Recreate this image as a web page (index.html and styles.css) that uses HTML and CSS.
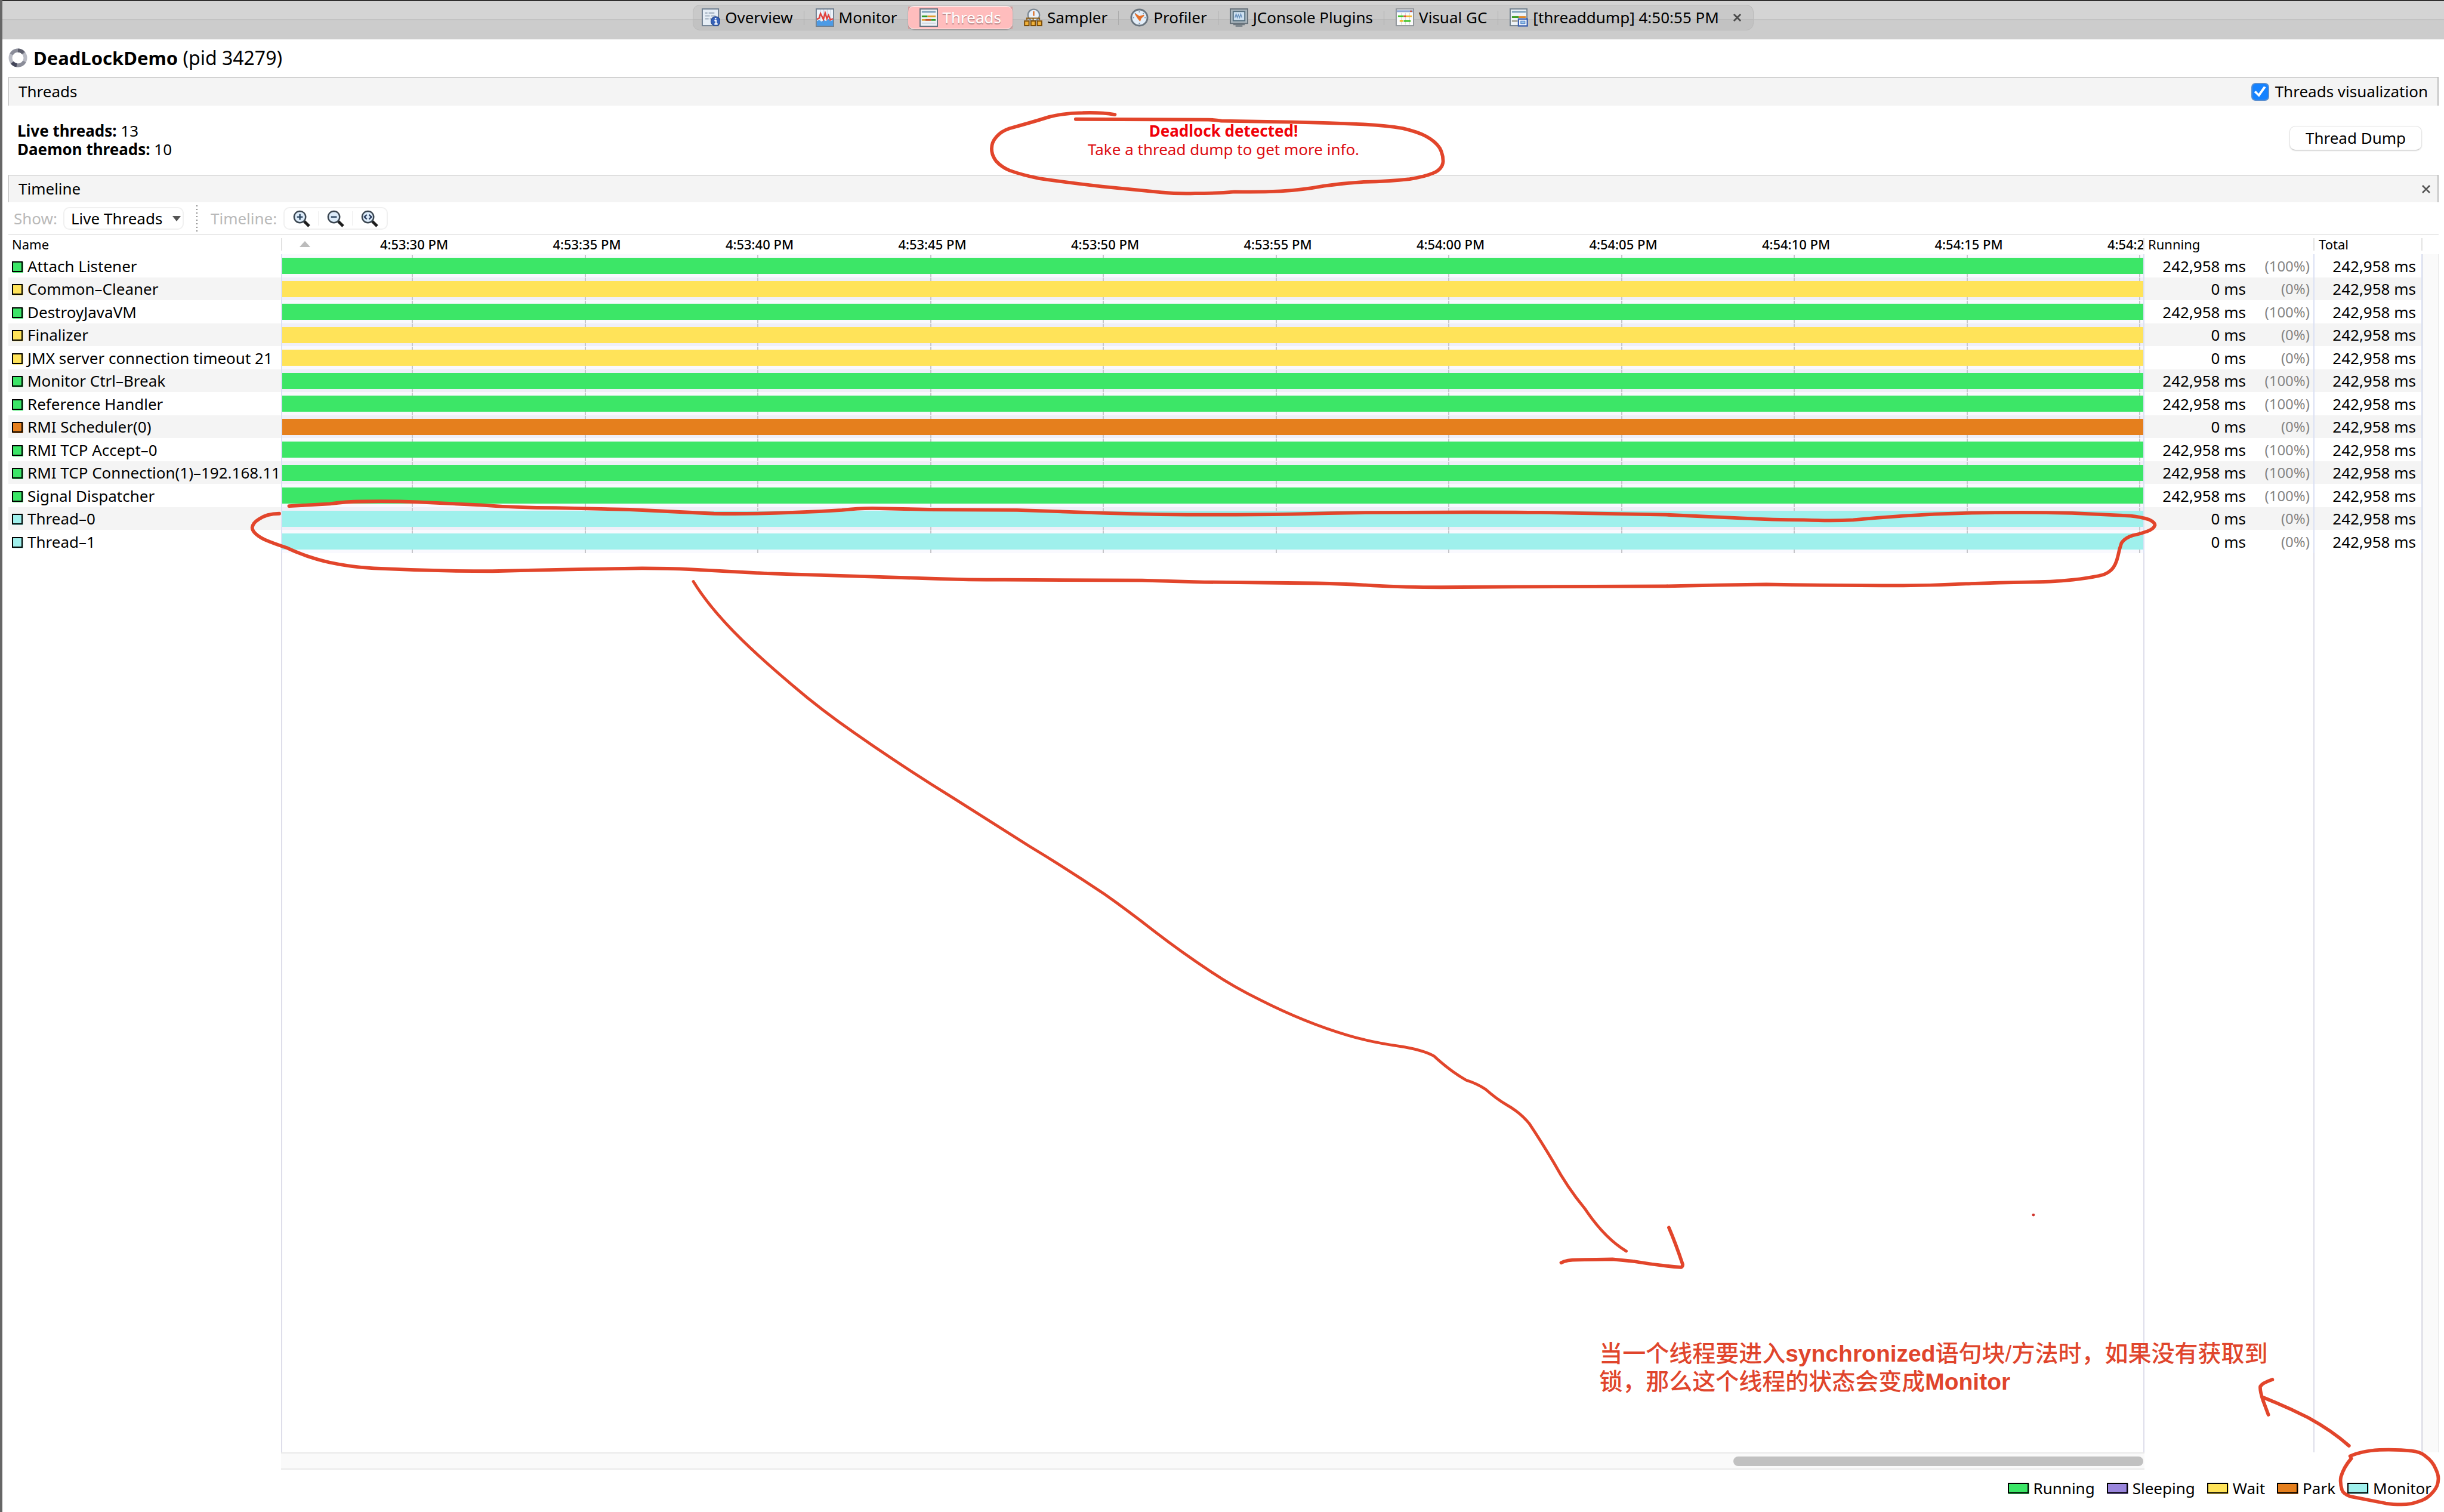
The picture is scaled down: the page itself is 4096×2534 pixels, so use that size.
FILE: index.html
```html
<!DOCTYPE html>
<html lang="en">
<head>
<meta charset="utf-8">
<title>DeadLockDemo (pid 34279)</title>
<link rel="stylesheet" href="styles.css">
</head>
<body>
<div class="app">
  <header class="topbar">
    <nav class="tabs" aria-label="Views">
      <button class="tab" type="button">
        <svg class="icon" viewBox="0 0 16 16"><rect x=".5" y=".5" width="14" height="14.5" fill="#e6eef6" stroke="#6f7f90"/><path d="M3 4h2m1 0h5M3 6.5h4m1 0h4M3 9h3m1 0h3" stroke="#9aaabb"/><circle cx="12" cy="11.2" r="4" fill="#3762b8" stroke="#27488c" stroke-width=".6"/><path d="M11 10.5h1.4v3M11 13.6h2.8" stroke="#fff" stroke-width="1.1" fill="none"/><circle cx="12" cy="8.9" r=".7" fill="#fff"/></svg>
        Overview</button>
      <button class="tab" type="button">
        <svg class="icon" viewBox="0 0 16 16"><rect x=".5" y=".5" width="15" height="15" fill="#eef3fa" stroke="#6f7f90"/><path d="M4 1v14M7 1v14M10 1v14M13 1v14" stroke="#c3cfdd" stroke-width=".6"/><path d="M1 15v-4l2-1 2 1.500 2-1.500 2 1 2-2 2 2 2-1v5z" fill="#4c9be6"/><path d="M1 9.500l2-1 1.200-4 1.500 3 1 2 1.500-5.500 1.500 5 1.500-3 1.500 4 2.300-1" fill="none" stroke="#e0413c" stroke-width="1.300"/></svg>
        Monitor</button>
      <button class="tab tab-selected" type="button" aria-current="page"><span class="tab-face">
        <svg class="icon" viewBox="0 0 16 16"><rect x=".5" y=".5" width="15" height="15" fill="#eef3f7" stroke="#62717f"/><path d="M2 3h12" stroke="#7fa3bd" stroke-width="1.600"/><path d="M2 7h5M10 10h4" stroke="#2f9a28" stroke-width="1.500"/><path d="M7 7h7M2 10h3" stroke="#dd9a2b" stroke-width="1.500"/><path d="M5 10h5" stroke="#c2562b" stroke-width="1.500"/><path d="M2 12.800h12" stroke="#cfd9e0"/></svg>
        Threads</span></button>
      <button class="tab tab-plain" type="button">
        <svg class="icon" viewBox="0 0 16 16"><circle cx="8.500" cy="5.800" r="5" fill="#e8f1fa" stroke="#7c8893" stroke-width="1.200"/><path d="M8.500 2.500v4" stroke="#dd6a1c" stroke-width="1.200"/><path d="M2.500 10v-1.500h11V10M8 8v3" stroke="#8b5a10" fill="none"/><path d="M.6 11h3.800v4H.6zM6.100 11h3.800v4H6.100zM11.600 11h3.800v4h-3.800z" fill="#f0b13a" stroke="#7d4e08" stroke-width="1"/></svg>
        Sampler</button>
      <button class="tab" type="button">
        <svg class="icon" viewBox="0 0 16 16"><circle cx="8" cy="8" r="7" fill="#e4effa" stroke="#69747e" stroke-width="1.500"/><path d="M8 2.500v1M8 12.500v1M2.500 8h1M12.500 8h1M4.200 4.200l.6.6M11.200 4.800l.6-.6" stroke="#7b93ab"/><path d="M4.500 4.800L8 7.200 12 6l-2.800 2.600L8.500 10.500 7.200 9z" fill="#e5702a" stroke="#e5702a"/></svg>
        Profiler</button>
      <button class="tab" type="button">
        <svg class="icon" viewBox="0 0 16 16"><rect x=".5" y=".5" width="15" height="12.500" fill="#a9b5bd" stroke="#66717a"/><rect x="3" y="2.700" width="10" height="8" fill="#cfe2f2" stroke="#56707f"/><path d="M4.500 8l1-3 1 3 1-2.500 1 2.500 1-3 1 3" fill="none" stroke="#6c93bd" stroke-width=".8"/><path d="M3 14h10M5 15.300h6" stroke="#6e7880" stroke-width="1.200"/></svg>
        JConsole Plugins</button>
      <button class="tab" type="button">
        <svg class="icon" viewBox="0 0 16 16"><rect x=".5" y=".5" width="15" height="14.500" fill="#fbfbfb" stroke="#8f9499"/><path d="M1 2.500h14" stroke="#8ea6d4" stroke-width="1.600"/><path d="M12.500 2.500h1.500" stroke="#d24b2c" stroke-width="1.200"/><path d="M5 4v10M8.500 4v10M12 4v10" stroke="#d8d8d8" stroke-width=".7"/><path d="M2 6.800h5" stroke="#35c01c" stroke-width="1.300"/><path d="M7 6.800h2" stroke="#e23b2e" stroke-width="1.300"/><path d="M9 6.800h5M3.500 11h3" stroke="#f2b21d" stroke-width="1.300"/><path d="M7 11h6" stroke="#35c01c" stroke-width="1.300"/></svg>
        Visual GC</button>
      <button class="tab" type="button">
        <svg class="icon" viewBox="0 0 16 16"><rect x=".5" y=".5" width="14.500" height="14.500" fill="#eef3f7" stroke="#71808e"/><path d="M2 3h12" stroke="#7fa3bd" stroke-width="1.600"/><path d="M2 7.500h6" stroke="#3d9d25" stroke-width="1.500"/><path d="M8 7.500h6" stroke="#e08a2d" stroke-width="1.500"/><path d="M2 11h5" stroke="#a9a79b" stroke-width="1.500"/><rect x="7.700" y="9.200" width="7.600" height="6" fill="#fff" stroke="#3a5fae" stroke-width="1.200"/><rect x="9.700" y="11" width="3.600" height="2.300" fill="#9cc4ea" stroke="#5b8bcb" stroke-width=".7"/></svg>
        [threaddump] 4:50:55 PM
        <svg class="tab-close" viewBox="0 0 14 14"><path d="M1 1l12 12M13 1L1 13" stroke="#4a4a4a" stroke-width="3"/></svg></button>
    </nav>
  </header>

  <main class="content">
    <h1 class="title">
      <svg class="title-icon" viewBox="0 0 32 32"><circle cx="16" cy="16" r="12.500" fill="none" stroke="#b9bbc4" stroke-width="6"/><path d="M5 10A12.500 12.500 0 0 1 26 8.500" fill="none" stroke="#8b8d99" stroke-width="6"/><path d="M16 3.500A12.500 12.500 0 0 1 25 7.500" fill="none" stroke="#5c5e6c" stroke-width="6"/><path d="M27 22A12.500 12.500 0 0 1 6 23.500" fill="none" stroke="#8b8d99" stroke-width="6"/><path d="M14 28.300A12.500 12.500 0 0 1 6.500 24" fill="none" stroke="#44465a" stroke-width="6"/></svg>
      <span><strong>DeadLockDemo</strong> (pid 34279)</span>
    </h1>

    <div class="section-bar section-threads">
      <h2>Threads</h2>
      <label class="check"><input type="checkbox" checked> Threads visualization</label>
    </div>

    <section class="info">
      <div><strong>Live threads:</strong> 13<br><strong>Daemon threads:</strong> 10</div>
      <div class="alert"><strong>Deadlock detected!</strong><br>Take a thread dump to get more info.</div>
      <button class="dump" type="button">Thread Dump</button>
    </section>

    <div class="section-bar section-timeline">
      <h2>Timeline</h2>
      <button class="close" type="button" aria-label="Close"><svg viewBox="0 0 14 14"><path d="M1 1l12 12M13 1L1 13" stroke="#505050" stroke-width="2.600"/></svg></button>
    </div>

    <div class="toolbar">
      <label class="muted" for="show">Show:</label>
      <span class="select-box">
        <select id="show"><option>Live Threads</option></select>
        <svg class="arrow" viewBox="0 0 14 9"><path d="M0 0h14L7 9z" fill="#555"/></svg>
      </span>
      <span class="divider"></span>
      <span class="muted">Timeline:</span>
      <div class="zoom-group">
        <button type="button" aria-label="Zoom in"><svg viewBox="0 0 30 30"><path d="M19 19l9 9" stroke="#1c1c1c" stroke-width="5"/><circle cx="12" cy="12" r="10" fill="#dcebf9" stroke="#3a4550" stroke-width="2.500"/><path d="M7 12h10M12 7v10" stroke="#2d4660" stroke-width="2.500"/></svg></button>
        <button type="button" aria-label="Zoom out"><svg viewBox="0 0 30 30"><path d="M19 19l9 9" stroke="#1c1c1c" stroke-width="5"/><circle cx="12" cy="12" r="10" fill="#dcebf9" stroke="#3a4550" stroke-width="2.500"/><path d="M7 12h10" stroke="#2d4660" stroke-width="2.500"/></svg></button>
        <button type="button" aria-label="Scale to fit"><svg viewBox="0 0 30 30"><path d="M19 19l9 9" stroke="#1c1c1c" stroke-width="5"/><circle cx="12" cy="12" r="10" fill="#dcebf9" stroke="#3a4550" stroke-width="2.500"/><path d="M10 8l-4 4 4 4M14 8l4 4-4 4" fill="none" stroke="#2d3f60" stroke-width="2.500"/></svg></button>
      </div>
    </div>

    <div class="grid">
      <table class="threads">
        <colgroup><col class="c-name"><col><col class="c-ms"><col class="c-pct"><col class="c-total"></colgroup>
        <thead>
          <tr>
            <th class="sep">Name</th>
            <th class="sep axis-cell"><div class="axis"><svg class="sort" viewBox="0 0 18 10"><path d="M0 10L9 0l9 10z" fill="#bcbcbc"/></svg><span>4:53:30 PM</span><span>4:53:35 PM</span><span>4:53:40 PM</span><span>4:53:45 PM</span><span>4:53:50 PM</span><span>4:53:55 PM</span><span>4:54:00 PM</span><span>4:54:05 PM</span><span>4:54:10 PM</span><span>4:54:15 PM</span><span>4:54:20 PM</span></div></th>
            <th class="sep" colspan="2">Running</th>
            <th class="sep total-head">Total</th>
          </tr>
        </thead>
        <tbody>
          <tr class="running"><td><i></i>Attach Listener</td><td><b></b></td><td>242,958 ms</td><td>(100%)</td><td>242,958 ms</td></tr>
          <tr class="wait"><td><i></i>Common–Cleaner</td><td><b></b></td><td>0 ms</td><td>(0%)</td><td>242,958 ms</td></tr>
          <tr class="running"><td><i></i>DestroyJavaVM</td><td><b></b></td><td>242,958 ms</td><td>(100%)</td><td>242,958 ms</td></tr>
          <tr class="wait"><td><i></i>Finalizer</td><td><b></b></td><td>0 ms</td><td>(0%)</td><td>242,958 ms</td></tr>
          <tr class="wait"><td><i></i>JMX server connection timeout 21</td><td><b></b></td><td>0 ms</td><td>(0%)</td><td>242,958 ms</td></tr>
          <tr class="running"><td><i></i>Monitor Ctrl–Break</td><td><b></b></td><td>242,958 ms</td><td>(100%)</td><td>242,958 ms</td></tr>
          <tr class="running"><td><i></i>Reference Handler</td><td><b></b></td><td>242,958 ms</td><td>(100%)</td><td>242,958 ms</td></tr>
          <tr class="park"><td><i></i>RMI Scheduler(0)</td><td><b></b></td><td>0 ms</td><td>(0%)</td><td>242,958 ms</td></tr>
          <tr class="running"><td><i></i>RMI TCP Accept–0</td><td><b></b></td><td>242,958 ms</td><td>(100%)</td><td>242,958 ms</td></tr>
          <tr class="running"><td><i></i>RMI TCP Connection(1)–192.168.11</td><td><b></b></td><td>242,958 ms</td><td>(100%)</td><td>242,958 ms</td></tr>
          <tr class="running"><td><i></i>Signal Dispatcher</td><td><b></b></td><td>242,958 ms</td><td>(100%)</td><td>242,958 ms</td></tr>
          <tr class="monitor"><td><i></i>Thread–0</td><td><b></b></td><td>0 ms</td><td>(0%)</td><td>242,958 ms</td></tr>
          <tr class="monitor"><td><i></i>Thread–1</td><td><b></b></td><td>0 ms</td><td>(0%)</td><td>242,958 ms</td></tr>
          <tr class="filler"><td></td><td></td><td></td><td></td><td></td></tr>
        </tbody>
      </table>
      <div class="gutter"></div>
    </div>

    <div class="hscroll"><div class="thumb"></div></div>

    <ul class="legend">
      <li class="running"><i></i>Running</li>
      <li class="sleeping"><i></i>Sleeping</li>
      <li class="wait"><i></i>Wait</li>
      <li class="park"><i></i>Park</li>
      <li class="monitor"><i></i>Monitor</li>
    </ul>
  </main>

  <svg class="ink" viewBox="0 0 4244 2626" preserveAspectRatio="none" aria-hidden="true">
    <path d="M1936 199Q1912 195 1880 196Q1850 196 1822 203Q1790 213 1753 223Q1738 228 1730 238Q1722 247 1722 258Q1722 270 1730 280Q1739 290 1753 296Q1775 304 1805 310Q1860 318 1914 324L2017 334Q2045 337 2075 336Q2110 336 2144 333Q2184 334 2224 332Q2262 330 2299 323Q2334 318 2368 316Q2412 315 2448 311Q2474 307 2488 301Q2505 294 2506 280Q2506 268 2500 257Q2493 246 2477 237Q2462 229 2436 223Q2408 218 2368 216Q2308 213 2247 212L2121 210Q2110 208 2098 208L1868 207"/>
    <path d="M502 879Q540 877 573 875Q600 871 628 871Q680 870 725 872L834 877Q900 882 964 882L1094 885Q1180 889 1240 892Q1310 893 1376 890Q1420 889 1462 886Q1496 882 1527 883L1614 885L1766 886L1918 891Q2020 894 2113 894Q2180 894 2243 893Q2340 890 2438 890Q2560 889 2676 890L2893 894L3023 900Q3080 903 3132 903Q3180 905 3218 903Q3260 899 3305 896Q3360 892 3414 891Q3510 889 3598 891L3700 896Q3718 898 3731 902Q3742 907 3742 912Q3740 919 3728 923Q3715 928 3703 930Q3690 934 3684 943Q3680 954 3678 965Q3674 983 3666 990Q3657 998 3645 1000Q3625 1004 3600 1007Q3560 1011 3522 1011Q3468 1012 3414 1014Q3360 1017 3305 1017Q3180 1017 3067 1015Q2980 1016 2893 1018L2640 1019L2503 1020Q2440 1020 2384 1017Q2340 1014 2286 1013L2091 1011L1983 1008L1744 1007Q1680 1007 1625 1005L1527 1002Q1420 999 1332 996L1202 989Q1160 987 1115 987Q980 989 855 992Q750 992 649 987Q610 985 573 977Q530 967 497 951Q475 944 459 937Q438 926 438 916Q439 908 449 902Q463 892 485 892"/>
    <path class="thin" d="M1204 1010Q1232 1056 1289 1112Q1326 1148 1376 1190Q1426 1233 1484 1273Q1568 1332 1657 1387L1788 1470Q1856 1511 1918 1553Q1962 1584 2004 1617Q2052 1654 2102 1687Q2140 1713 2189 1737Q2266 1776 2340 1798Q2380 1810 2430 1817Q2470 1823 2490 1834Q2518 1860 2546 1876Q2565 1882 2580 1892Q2598 1908 2615 1918Q2640 1932 2656 1952Q2676 1982 2698 2019Q2722 2063 2752 2099Q2786 2150 2824 2173"/>
    <path d="M2711 2193Q2720 2188 2740 2188Q2790 2187 2800 2187Q2820 2189 2839 2191Q2880 2198 2919 2201Q2922 2200 2922 2196Q2910 2160 2898 2132"/>
    <path d="M3946 2396Q3928 2402 3925 2408Q3924 2415 3930 2433L3939 2457M3930 2427Q3970 2443 4008 2462Q4050 2485 4079 2511"/>
    <path d="M4081 2529Q4100 2520 4132 2518Q4165 2517 4188 2520Q4203 2521 4213 2530Q4224 2538 4229 2550Q4235 2562 4234 2570Q4234 2580 4226 2590Q4216 2603 4202 2607Q4188 2613 4170 2613Q4155 2613 4143 2611L4081 2599Q4069 2594 4067 2588Q4063 2575 4065 2565Q4070 2548 4083 2533"/>
    <circle cx="3531" cy="2110" r="2.500"/>
  </svg>
  <p class="note" lang="zh-CN">当一个线程要进入<strong>synchronized</strong>语句块/方法时，如果没有获取到<br>锁，那么这个线程的状态会变成<strong>Monitor</strong></p>
</div>
</body>
</html>
```

FILE: styles.css
```css
* { box-sizing: border-box; }

body {
  margin: 0;
  background: #fff;
  color: #000;
  font: 26px/31px "Noto Sans", "Open Sans", sans-serif;
}

button, select, input { font: inherit; color: inherit; margin: 0; }
button { border: 0; padding: 0; background: none; }
h1, h2, p, ul { margin: 0; padding: 0; font-weight: 400; }
h2 { font-size: 26px; }
svg { display: block; flex: none; }

.app {
  position: relative;
  display: flex;
  flex-direction: column;
  min-height: 100vh;
  border-left: 4px solid #666;
}

/* Top tab strip */
.topbar {
  display: flex;
  justify-content: center;
  align-items: center;
  height: 66px;
  padding-bottom: 9px;
  border-top: 2px solid #302f2f;
  background: linear-gradient(#d4d4d4 0 30px, #c2c2c2 30px 32px, #ccc 32px);
}

.tabs {
  display: flex;
  align-items: center;
  height: 43px;
  border: 1px solid #bababa;
  border-radius: 12px;
  background: linear-gradient(#c9c9c9 0 23px, #b9b9b9 23px 24px, #c2c2c2 24px);
}

.tab {
  display: flex;
  align-items: center;
  gap: 8px;
  height: 24px;
  padding: 0 18px 0 19px;
  border-left: 1px solid #acacac;
  white-space: nowrap;
}

.tab:first-child { padding-left: 14px; border-left: 0; }
.tab-plain { border-left: 0; }
.icon { width: 31px; height: 31px; }
.tab-close { width: 13px; height: 13px; margin: 0 2px 0 16px; }

.tab-selected {
  height: 37px;
  padding: 0;
  border: 0;
  background: #d89c9c;
  color: #fff;
  text-shadow: 0 2px 1px #b88;
}

.tab-face {
  display: flex;
  align-items: center;
  gap: 8px;
  height: 39px;
  padding: 0 19px;
  border: 1px solid #fff;
  border-width: 1px 0;
  border-radius: 10px;
  background: #ffbdbd;
  box-shadow: 0 1px 2px #888;
}

/* Title and section bars */
.content { display: flex; flex: 1; flex-direction: column; padding: 0 9px 0 10px; }

.title {
  display: flex;
  align-items: center;
  gap: 10px;
  height: 62px;
  margin-bottom: 1px;
  font-size: 32px;
}

.title strong { font-size: 31px; }
.title-icon { width: 32px; height: 32px; }

.section-bar {
  display: flex;
  align-items: center;
  justify-content: space-between;
  padding: 0 16px;
  border: 1px solid #bdbdbd;
  border-right-width: 2px;
  border-bottom: 0;
  background: #f4f4f4;
}

.section-threads { height: 48px; }
.section-timeline { height: 46px; }

.check { display: flex; align-items: center; gap: 10px; }

.check input {
  position: relative;
  width: 30px;
  height: 30px;
  border: 2px solid #5b8fcf;
  border-radius: 7px;
  background: #1582ff;
  appearance: none;
}

.check input::after {
  content: "";
  position: absolute;
  inset: 4px 3px;
  background: #fff;
  clip-path: polygon(0 55%, 15% 42%, 38% 70%, 82% 0, 100% 10%, 42% 100%);
}

.close svg { width: 14px; height: 14px; }
.section-timeline { padding-right: 12px; }

.info {
  display: grid;
  grid-template-columns: 1fr auto 1fr;
  align-items: center;
  height: 116px;
  padding: 0 15px;
}

.alert { color: #dd0d12; text-align: center; }
.alert strong { color: #f00008; }

.dump {
  justify-self: end;
  width: 222px;
  height: 41px;
  margin: 0 13px 8px 0;
  border: 1px solid #e4e4e4;
  border-bottom-color: #c8c8c8;
  border-radius: 10px;
  background: #fff;
  box-shadow: 0 1px 2px #ddd;
}

/* Toolbar */
.toolbar {
  display: flex;
  align-items: center;
  height: 55px;
  padding-left: 9px;
  border-bottom: 1px solid #d6d6d6;
}

.muted { color: #b9b9b9; }

.select-box { position: relative; margin-left: 10px; }

.select-box select {
  display: block;
  width: 202px;
  height: 38px;
  padding: 0 11px;
  border: 2px solid #f0f0f0;
  border-radius: 10px;
  background: #fff;
  appearance: none;
}

.arrow { position: absolute; right: 5px; top: 15px; width: 14px; height: 9px; pointer-events: none; }

.divider {
  width: 2px;
  height: 44px;
  margin: 0 22px 0 21px;
  background: repeating-linear-gradient(#8a8a8a 0 2px, transparent 2px 6px);
}

.zoom-group {
  display: flex;
  height: 38px;
  margin-left: 11px;
  border: 2px solid #f0f0f0;
  border-radius: 10px;
}

.zoom-group button { display: flex; align-items: center; justify-content: center; width: 57px; background: linear-gradient(#eee, #eee) right center / 1px 24px no-repeat; }
.zoom-group button:last-child { background: none; }
.zoom-group svg { width: 29px; height: 29px; }

/* Thread table */
.grid { display: flex; flex: 1; }

.threads { flex: 1 1 0; width: 100%; min-width: 0; table-layout: fixed; border-collapse: separate; border-spacing: 0; }
.c-name { width: 459px; }
.c-ms { width: 178px; }
.c-pct { width: 107px; }
.c-total { width: 181px; }

th {
  height: 32px;
  padding: 0 6px 2px;
  font-size: 22px;
  font-weight: 400;
  line-height: 28px;
  text-align: left;
}

.sep { background: linear-gradient(#e2e2e2, #e2e2e2) right 5px / 2px 21px no-repeat; }
.total-head { padding-left: 7px; }
.axis-cell { padding: 0 2px 2px 0; }

.axis {
  display: grid;
  grid-template-columns: 76px repeat(6, 290px 289px);
  align-items: center;
  overflow: hidden;
  font-weight: 500;
  text-align: center;
}

.sort { width: 18px; height: 10px; margin-left: 29px; }

td {
  height: 39px;
  padding: 0;
  overflow: hidden;
  border-right: 2px solid #dbe1f4;
  line-height: 36px;
  text-align: right;
  white-space: nowrap;
}

tbody tr:nth-child(even) td { height: 38px; background-color: #f4f4f4; }
td:nth-child(1) { padding-left: 6px; text-align: left; }
td:nth-child(3) { padding-right: 8px; border-right: 0; }
td:nth-child(4) { padding-right: 6px; color: #858585; font-size: 24px; }
td:nth-child(5) { padding-right: 9px; }

tbody td:nth-child(2) {
  background: #f9f9fe repeating-linear-gradient(to right, #c6c6ca 0 2px, transparent 2px 290px, #c6c6ca 290px 292px, transparent 292px 579px) 217px 1px no-repeat;
}
tbody tr:nth-child(even) td:nth-child(2) { background-color: #efeff8; }

td b { display: block; height: 27px; background: var(--state); }

td i, .legend i {
  display: inline-block;
  width: 18px;
  height: 18px;
  margin-right: 8px;
  border: 2px solid #000;
  background: var(--state);
  box-shadow: 1px 1px var(--state);
}

tbody tr.filler td:nth-child(n) { height: auto; background: none; border-color: #dedeea; }

.running { --state: #3ce667; }
.sleeping { --state: #9a86dd; }
.wait { --state: #ffe359; }
.park { --state: #e57f1d; }
.monitor { --state: #9ff0ec; }

.gutter {
  width: 27px;
  flex: none;
  margin-top: 32px;
  border: 1px solid #e8e8e8;
  border-width: 0 1px;
  background: #fafafa;
}

/* Horizontal scroll bar under the timeline column */
.hscroll {
  display: flex;
  align-items: center;
  justify-content: flex-end;
  height: 29px;
  margin: 0 493px 0 457px;
  padding-right: 2px;
  border: 2px solid #e9e9e9;
  border-width: 2px 0;
  background: #fafafa;
}

.thumb { width: 22%; height: 16px; border-radius: 8px; background: #c1c1c1; }

.legend {
  display: flex;
  align-items: center;
  justify-content: flex-end;
  gap: 20px;
  height: 71px;
  padding: 0 12px 9px 0;
  list-style: none;
}

.legend li { display: flex; align-items: center; }
.legend i { width: 35px; margin-right: 8px; }

/* Hand-drawn marks over the window */
.ink {
  position: absolute;
  top: 0;
  left: -4px;
  width: calc(100% + 4px);
  height: 100%;
  fill: none;
  stroke: #e2452b;
  stroke-width: 6;
  stroke-linecap: round;
  stroke-linejoin: round;
  pointer-events: none;
}

.thin { stroke-width: 5; }
.ink circle { fill: #d0342c; stroke: none; }

.note {
  position: absolute;
  top: 2245px;
  left: 65.4%;
  color: #e0452c;
  font: 500 39px/47px "Liberation Sans", "Noto Sans CJK SC", sans-serif;
  white-space: nowrap;
}
```
